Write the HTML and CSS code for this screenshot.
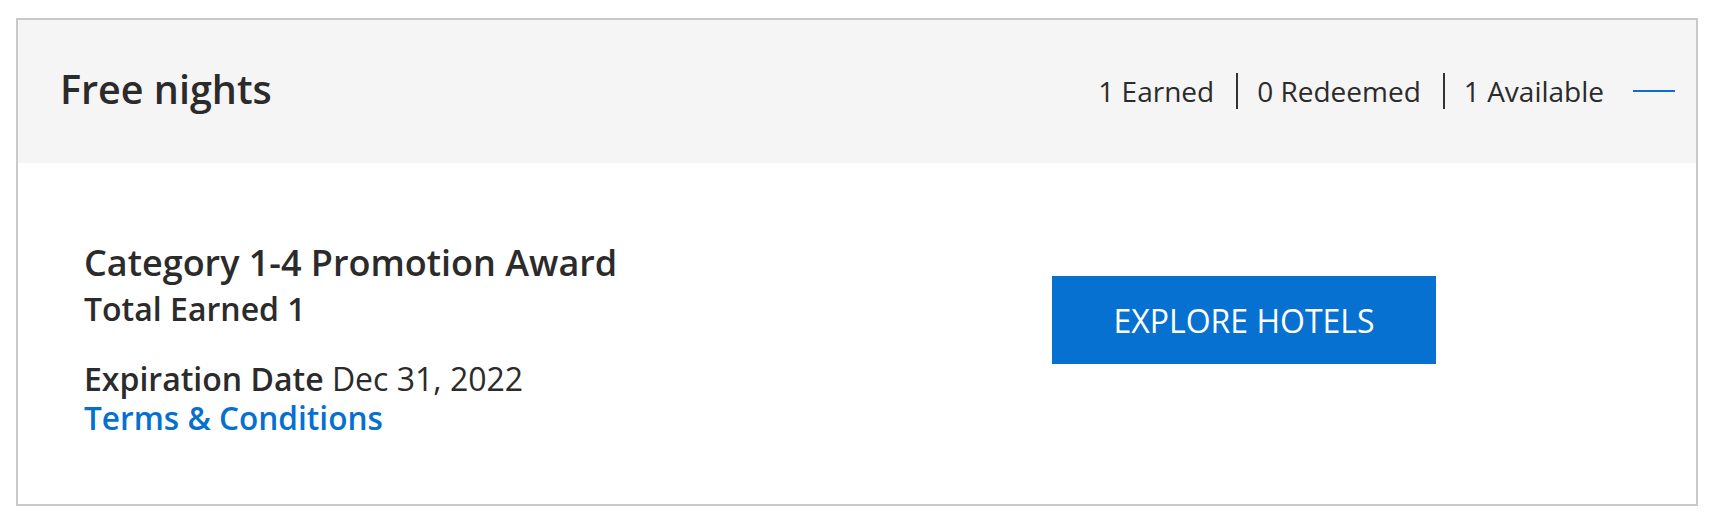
FILE: index.html
```html
<!DOCTYPE html>
<html lang="en">
<head>
<meta charset="utf-8">
<title>Free nights</title>
<link rel="stylesheet" href="styles.css">
</head>
<body>
<section class="card">
  <header class="card-header">
    <h2 class="card-title">Free nights</h2>
    <div class="stats">
      <span class="stat">1 Earned</span>
      <span class="sep"></span>
      <span class="stat">0 Redeemed</span>
      <span class="sep"></span>
      <span class="stat">1 Available</span>
      <button class="collapse" aria-label="Collapse"><span class="dash"></span></button>
    </div>
  </header>
  <div class="card-body">
    <div class="award">
      <div class="award-name">Category 1-4 Promotion Award</div>
      <div class="award-total">Total Earned 1</div>
      <div class="award-exp"><strong>Expiration Date</strong> Dec 31, 2022</div>
      <a class="award-terms" href="#">Terms &amp; Conditions</a>
    </div>
    <div class="actions">
      <a class="btn" href="#">EXPLORE HOTELS</a>
    </div>
  </div>
</section>
</body>
</html>
```

FILE: styles.css
```css
html, body {
  margin: 0;
  padding: 0;
  background: #ffffff;
}
body {
  padding: 18px 14px 16px 16px;
  font-family: "Open Sans", "Noto Sans", sans-serif;
  color: #2b2b2b;
}
.card {
  border: 2px solid #c9c9c9;
  background: #ffffff;
}
.card-header {
  background: #f5f5f5;
  height: 143px;
  display: flex;
  align-items: center;
  justify-content: space-between;
  padding: 0 21px 0 42px;
}
.card-title {
  margin: 0 0 3px;
  font-size: 39.5px;
  font-weight: 600;
  line-height: 1.2;
  color: #2b2b2b;
}
.stats {
  display: flex;
  align-items: center;
}
.stat {
  font-size: 28px;
  line-height: 1.3;
  color: #2b2b2b;
}
.sep {
  width: 2px;
  height: 36px;
  background: #333333;
  margin: 0 19px 0 22px;
}
.collapse {
  border: 0;
  background: transparent;
  padding: 0;
  margin-left: 29px;
  width: 42px;
  height: 20px;
  display: flex;
  align-items: center;
  cursor: pointer;
}
.dash {
  display: block;
  width: 42px;
  height: 2px;
  background: #0a6fd0;
}
.card-body {
  display: flex;
  align-items: flex-start;
  padding: 79px 0 67px 66px;
}
.award {
  flex: 0 0 968px;
  display: flex;
  flex-direction: column;
  align-items: flex-start;
}
.award-name {
  font-size: 36px;
  font-weight: 600;
  line-height: 42px;
}
.award-total {
  font-size: 32px;
  font-weight: 600;
  line-height: 40px;
  margin-top: 5px;
}
.award-exp {
  font-size: 32px;
  line-height: 40px;
  margin-top: 30px;
}
.award-exp strong {
  font-weight: 600;
}
.award-terms {
  font-size: 31.6px;
  line-height: 38px;
  font-weight: 600;
  color: #0670d0;
  text-decoration: none;
}
.actions {
  display: flex;
  padding-top: 34px;
}
.btn {
  display: flex;
  align-items: center;
  justify-content: center;
  width: 384px;
  height: 88px;
  background: #0671d1;
  color: #ffffff;
  font-size: 32px;
  font-weight: 400;
  text-decoration: none;
}
```
